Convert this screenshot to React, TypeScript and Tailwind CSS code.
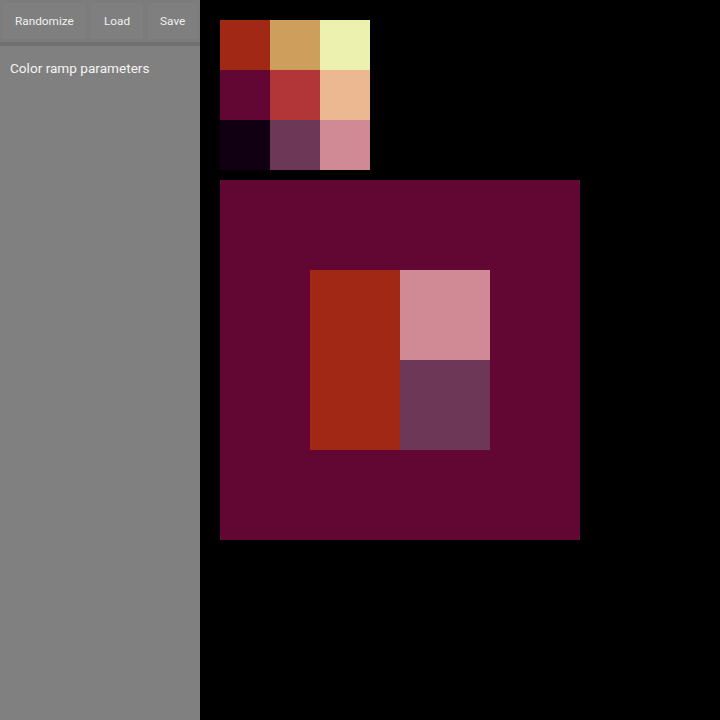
const swatches = [
  ['bg-[#a12815]', 'bg-[#cd9e5c]', 'bg-[#ecf1b0]'],
  ['bg-[#620633]', 'bg-[#b23537]', 'bg-[#ebb891]'],
  ['bg-[#100012]', 'bg-[#6d3858]', 'bg-[#cf8a96]'],
];

export default function App() {
  return (
    <div className="flex w-[720px] h-[720px] bg-black font-['Roboto',sans-serif]">
      {/* side panel */}
      <div className="w-[200px] h-full bg-[#808080] flex flex-col">
        <div className="h-[42px] flex gap-[3px] px-[2px] py-[2px] bg-[#7c7c7c]">
          <button className="px-[12px] pt-[2px] bg-[#7f7f7f] text-[11.8px] text-[#f0f0f0] border border-[#7b7b7b]">Randomize</button>
          <button className="w-[55px] pt-[2px] bg-[#7f7f7f] text-[11.8px] text-[#f0f0f0] border border-[#7b7b7b]">Load</button>
          <button className="w-[51px] pt-[2px] bg-[#7f7f7f] text-[11.8px] text-[#f0f0f0] border border-[#7b7b7b]">Save</button>
        </div>
        <div className="h-[4px] bg-[#717171]" />
        <div className="px-[10px] pt-[12px] text-[13.6px] text-[#f4f4f4]">Color ramp parameters</div>
      </div>

      {/* canvas */}
      <div className="flex-1 flex flex-col gap-[10px] pt-[20px] pl-[20px]">
        <div className="grid grid-cols-[50px_50px_50px] grid-rows-[50px_50px_50px] w-[150px]">
          {swatches.flat().map((c, i) => (
            <div key={i} className={c} />
          ))}
        </div>
        <div className="w-[360px] h-[360px] bg-[#620633] flex items-center justify-center">
          <div className="flex w-[180px] h-[180px]">
            <div className="w-[90px] bg-[#a12815]" />
            <div className="w-[90px] flex flex-col">
              <div className="h-[90px] bg-[#cf8a96]" />
              <div className="h-[90px] bg-[#6d3858]" />
            </div>
          </div>
        </div>
      </div>
    </div>
  );
}
